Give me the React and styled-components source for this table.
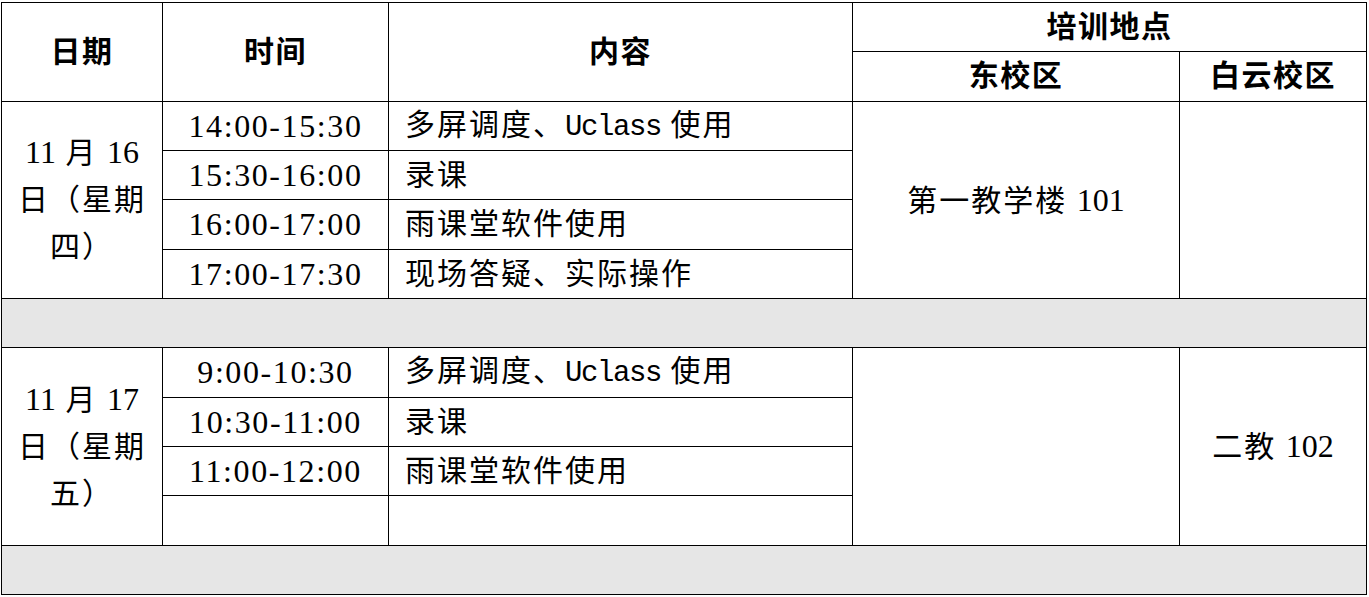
import styled, { createGlobalStyle } from 'styled-components'

const GlobalStyle = createGlobalStyle`
  html, body {
    margin: 0;
    padding: 0;
    background: #fff;
  }
`

const Page = styled.div`
  padding: 2px 0 0 1px;
  font-family: "Liberation Serif", "Noto Sans CJK SC", serif;
  color: #000;
`

const Table = styled.table`
  border-collapse: collapse;
  table-layout: fixed;
  width: 1365px;
  font-size: 30px;
  line-height: 1;
`

const Row = styled.tr`
  height: 49.33px;
`

const Cell = styled.td`
  border: 1.5px solid #000;
  padding: 0 ${p => (p.$align === 'left' ? '16px' : '4px')};
  text-align: ${p => p.$align || 'center'};
  vertical-align: middle;
  white-space: nowrap;
  font-weight: 400;
  letter-spacing: 2px;
`

const HeadCell = styled.th`
  border: 1.5px solid #000;
  padding: 0;
  text-align: center;
  vertical-align: middle;
  font-weight: 700;
  letter-spacing: 1.5px;
`

const DateCell = styled(Cell)`
  line-height: 47px;
`

const GapRow = styled.tr`
  height: 49.33px;
  td {
    border: 1.5px solid #000;
    background: #e6e6e6;
  }
`

const TimeText = styled.span`
  font-family: "Liberation Serif", serif;
  font-size: 32px;
  letter-spacing: 1.6px;
`

const Mono = styled.span`
  font-family: "Liberation Mono", monospace;
  font-size: 29px;
  letter-spacing: -1.4px;
`

const Times = styled.span`
  font-family: "Liberation Serif", serif;
  font-size: 32px;
  letter-spacing: 0;
`

const widths = [161, 226, 464, 327, 187]

function Block({ date, slots, east, baiyun }) {
  return (
    <>
      {slots.map((s, i) => (
        <Row key={i}>
          {i === 0 && (
            <DateCell rowSpan={slots.length}>
              {date.map((line, j) => (
                <div key={j}>{line}</div>
              ))}
            </DateCell>
          )}
          <Cell>{s.time && <TimeText>{s.time}</TimeText>}</Cell>
          <Cell $align="left">{s.content}</Cell>
          {i === 0 && <Cell rowSpan={slots.length}>{east}</Cell>}
          {i === 0 && <Cell rowSpan={slots.length}>{baiyun}</Cell>}
        </Row>
      ))}
      <GapRow>
        <td colSpan={5} />
      </GapRow>
    </>
  )
}

const uclass = <>多屏调度、<Mono>Uclass</Mono> 使用</>

export default function App() {
  return (
    <Page>
      <GlobalStyle />
      <Table>
        <colgroup>
          {widths.map((w, i) => (
            <col key={i} style={{ width: w }} />
          ))}
        </colgroup>
        <tbody>
          <Row>
            <HeadCell rowSpan={2}>日期</HeadCell>
            <HeadCell rowSpan={2}>时间</HeadCell>
            <HeadCell rowSpan={2}>内容</HeadCell>
            <HeadCell colSpan={2}>培训地点</HeadCell>
          </Row>
          <Row>
            <HeadCell>东校区</HeadCell>
            <HeadCell>白云校区</HeadCell>
          </Row>
          <Block
            date={[<><Times>11</Times> 月 <Times>16</Times></>, '日（星期', '四）']}
            slots={[
              { time: '14:00-15:30', content: uclass },
              { time: '15:30-16:00', content: '录课' },
              { time: '16:00-17:00', content: '雨课堂软件使用' },
              { time: '17:00-17:30', content: '现场答疑、实际操作' },
            ]}
            east={<>第一教学楼 <Times>101</Times></>}
            baiyun=""
          />
          <Block
            date={[<><Times>11</Times> 月 <Times>17</Times></>, '日（星期', '五）']}
            slots={[
              { time: '9:00-10:30', content: uclass },
              { time: '10:30-11:00', content: '录课' },
              { time: '11:00-12:00', content: '雨课堂软件使用' },
              { time: '', content: '' },
            ]}
            east=""
            baiyun={<>二教 <Times>102</Times></>}
          />
        </tbody>
      </Table>
    </Page>
  )
}
